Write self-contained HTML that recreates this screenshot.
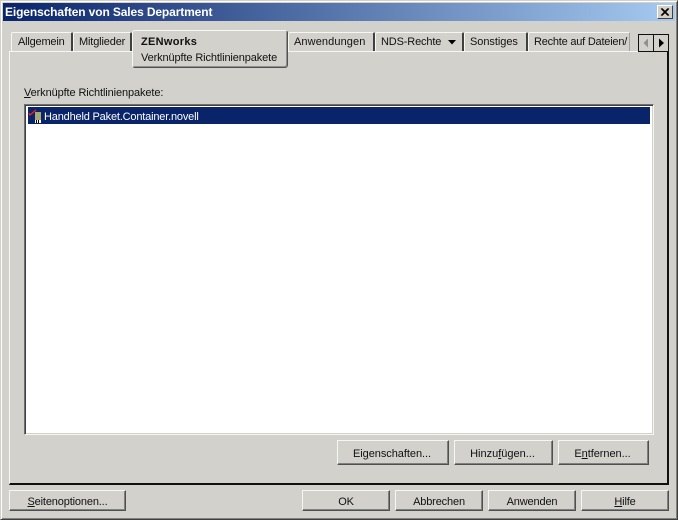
<!DOCTYPE html>
<html><head><meta charset="utf-8">
<style>
html,body{margin:0;padding:0}
body{width:678px;height:520px;overflow:hidden;position:relative;background:#d2d1cc;font-family:"Liberation Sans",sans-serif;font-size:11px;color:#111;letter-spacing:-.15px}
div{position:absolute;box-sizing:border-box}
.t{white-space:nowrap;line-height:13px}
.btn{background:#d2d1cc;border:1px solid;border-color:#f6f6f2 #505050 #505050 #f6f6f2;box-shadow:inset -1px -1px 0 #808080;text-align:center;white-space:nowrap;line-height:26px}
.tab{background:#d2d1cc;border-top:1px solid #f6f6f2;border-left:1px solid #f6f6f2;border-right:2px solid #404040;border-top-left-radius:2px;border-top-right-radius:2px;white-space:nowrap;line-height:19px;padding-left:5px}
u{text-decoration:underline}
</style></head><body>
<div style="left:0;top:0;width:678px;height:520px;border:1px solid;border-color:#d4d0c8 #404040 #404040 #d4d0c8;box-shadow:inset 1px 1px 0 #fff,inset -1px -1px 0 #808080"></div>
<div style="left:3px;top:3px;width:672px;height:18px;background:linear-gradient(90deg,#0a246a,#a6caf0)"></div>
<div class="t" style="left:5px;top:6px;color:#fff;font-weight:bold;font-size:12px;letter-spacing:-.12px">Eigenschaften von Sales Department</div>
<div style="left:657px;top:5px;width:16px;height:14px;background:#d4d0c8;border:1px solid;border-color:#fff #404040 #404040 #fff">
<svg width="14" height="12" style="position:absolute;left:0;top:0"><path d="M3 2.5L10 9.5M4 2.5L11 9.5M10 2.5L3 9.5M11 2.5L4 9.5" stroke="#000" stroke-width="1" fill="none"/></svg></div>

<div style="left:9px;top:51px;width:660px;height:434px;border:1px solid;border-color:#f6f6f2 #101010 #101010 #f6f6f2;border-width:1px 2px 2px 1px"></div>

<div class="tab" style="left:11px;top:32px;width:62px;height:19px;padding-left:6px;letter-spacing:-.2px">Allgemein</div>
<div class="tab" style="left:73px;top:32px;width:59px;height:19px">Mitglieder</div>
<div class="tab" style="left:288px;top:32px;width:87px;height:19px;letter-spacing:.1px">Anwendungen</div>
<div class="tab" style="left:375px;top:32px;width:89px;height:19px">NDS-Rechte</div>
<svg style="position:absolute;left:448px;top:40px" width="9" height="5"><path d="M0 0H8L4 4.5Z" fill="#000"/></svg>
<div class="tab" style="left:464px;top:32px;width:64px;height:19px;letter-spacing:-.05px">Sonstiges</div>
<div class="tab" style="left:528px;top:32px;width:102px;height:19px;border-right:1px solid #a0a0a0;overflow:hidden;letter-spacing:-.22px">Rechte auf Dateien/</div>

<div style="left:132px;top:30px;width:156px;height:38px;background:#d2d1cc;border:1px solid;border-color:#f6f6f2 #505050 #505050 #f6f6f2;border-radius:3px;box-shadow:inset -1px -1px 0 #909090"></div>
<div class="t" style="left:141px;top:36px;font-weight:bold;font-size:11px;letter-spacing:.3px">ZENworks</div>
<div class="t" style="left:141px;top:52px;letter-spacing:-.12px">Verknüpfte Richtlinienpakete</div>

<div style="left:638px;top:34px;width:31px;height:18px;background:#d2d1cc;border:1px solid #101010">
<div style="left:14px;top:0;width:1px;height:16px;background:#101010"></div>
<svg style="position:absolute;left:0;top:0" width="29" height="16"><path d="M9 3.5V12.5L4.5 8Z" fill="#909090"/><path d="M20 3.5V12.5L25 8Z" fill="#000"/></svg>
</div>

<div class="t" style="left:24px;top:87px;letter-spacing:-.11px"><u>V</u>erknüpfte Richtlinienpakete:</div>

<div style="left:24px;top:104px;width:630px;height:331px;background:#fff;border:1px solid;border-color:#707070 #f6f6f2 #f6f6f2 #707070;box-shadow:inset 1px 1px 0 #404040,inset -1px -1px 0 #d4d0c8"></div>
<div style="left:28px;top:107px;width:622px;height:17px;background:#0a246a"></div>
<svg style="position:absolute;left:28px;top:107px" width="16" height="17"><path d="M1 6L2 8L8 3" stroke="#ff2020" stroke-width="1.2" fill="none"/><rect x="7" y="5" width="6" height="8" fill="#a8a878"/><rect x="7" y="13" width="6" height="3" fill="#fff"/><path d="M8.5 13v3M10.5 13v3" stroke="#000"/></svg>
<div class="t" style="left:44px;top:111px;color:#fff;letter-spacing:-.18px">Handheld Paket.Container.novell</div>

<div class="btn" style="left:337px;top:440px;width:112px;height:25px;letter-spacing:-.05px;padding-right:2px">Ei<u>g</u>enschaften...</div>
<div class="btn" style="left:454px;top:440px;width:99px;height:25px;letter-spacing:0;padding-right:2px">Hinzu<u>f</u>ügen...</div>
<div class="btn" style="left:558px;top:440px;width:91px;height:25px;letter-spacing:-.05px;padding-right:2px">E<u>n</u>tfernen...</div>

<div class="btn" style="left:9px;top:490px;width:117px;height:21px;line-height:23px"><u>S</u>eitenoptionen...</div>
<div class="btn" style="left:302px;top:490px;width:88px;height:21px;line-height:23px">OK</div>
<div class="btn" style="left:395px;top:490px;width:88px;height:21px;line-height:23px">Abbrechen</div>
<div class="btn" style="left:488px;top:490px;width:88px;height:21px;line-height:23px">Anwenden</div>
<div class="btn" style="left:581px;top:490px;width:88px;height:21px;line-height:23px"><u>H</u>ilfe</div>
</body></html>
